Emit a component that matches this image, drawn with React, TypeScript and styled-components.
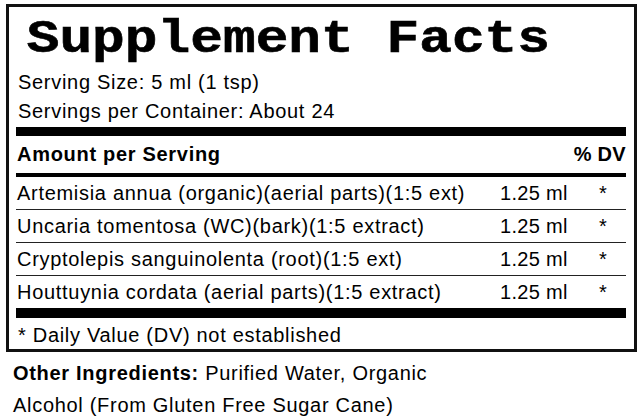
import styled, { createGlobalStyle } from "styled-components";

const GlobalStyle = createGlobalStyle`
  html, body {
    margin: 0;
    padding: 0;
    background: #fff;
  }
  body {
    font-family: "Liberation Sans", Arial, sans-serif;
    color: #000;
  }
`;

const Page = styled.div`
  width: 640px;
  height: 419px;
  padding: 4px 3px 0 6px;
  box-sizing: border-box;
  overflow: hidden;
`;

const Label = styled.section`
  border: 3px solid #111;
  padding: 0 8px 0 7px;
`;

const Title = styled.h1`
  margin: 7px 0 2px;
  padding-left: 9px;
  font-family: "Liberation Mono", "Courier New", monospace;
  font-weight: 700;
  font-size: 46px;
  line-height: 52px;
  white-space: nowrap;
  transform: scaleX(1.185);
  transform-origin: left center;
  -webkit-text-stroke: 0.6px #000;
`;

const InfoLine = styled.div`
  font-size: 20px;
  line-height: 29px;
  padding-left: 2px;
  letter-spacing: 0.7px;
`;

const Bar = styled.div<{ $h: number; $gap?: number }>`
  height: ${(p) => p.$h}px;
  margin-top: ${(p) => p.$gap ?? 0}px;
  background: #000;
`;

const HeadRow = styled.div`
  display: flex;
  justify-content: space-between;
  font-size: 20px;
  font-weight: 700;
  line-height: 37px;
  padding-left: 1px;
  letter-spacing: 0.7px;

  span:last-child {
    letter-spacing: 0.3px;
  }
`;

const Row = styled.div<{ $last?: boolean }>`
  display: grid;
  grid-template-columns: 484px 76px 1fr;
  align-items: center;
  box-sizing: border-box;
  height: ${(p) => (p.$last ? 32 : 33)}px;
  border-bottom: ${(p) => (p.$last ? "none" : "1px solid #222")};
  font-size: 20px;
`;

const Name = styled.span`
  padding-left: 1px;
  white-space: nowrap;
  letter-spacing: 0.7px;
`;

const Amount = styled.span`
  white-space: nowrap;
  letter-spacing: 0.3px;
`;

const Star = styled.span`
  text-align: center;
  padding-left: 4px;
`;

const Footnote = styled.div`
  padding-top: 4px;
  font-size: 20px;
  line-height: 27px;
  padding-left: 2px;
  letter-spacing: 0.7px;
`;

const Other = styled.p`
  margin: 5px 0 0;
  padding-left: 7px;
  font-size: 20px;
  line-height: 32px;
  letter-spacing: 0.7px;
  width: 440px;

  b {
    font-weight: 700;
  }
`;

const ingredients = [
  "Artemisia annua (organic)(aerial parts)(1:5 ext)",
  "Uncaria tomentosa (WC)(bark)(1:5 extract)",
  "Cryptolepis sanguinolenta (root)(1:5 ext)",
  "Houttuynia cordata (aerial parts)(1:5 extract)",
];

export default function App() {
  return (
    <Page>
      <GlobalStyle />
      <Label>
        <Title>Supplement Facts</Title>
        <InfoLine>Serving Size: 5 ml (1 tsp)</InfoLine>
        <InfoLine>Servings per Container: About 24</InfoLine>
        <Bar $h={9} $gap={1} />
        <HeadRow>
          <span>Amount per Serving</span>
          <span>% DV</span>
        </HeadRow>
        <Bar $h={4} />
        {ingredients.map((name, i) => (
          <Row key={name} $last={i === ingredients.length - 1}>
            <Name>{name}</Name>
            <Amount>1.25 ml</Amount>
            <Star>*</Star>
          </Row>
        ))}
        <Bar $h={10} />
        <Footnote>* Daily Value (DV) not established</Footnote>
      </Label>
      <Other>
        <b>Other Ingredients:</b> Purified Water, Organic
        <br />
        Alcohol (From Gluten Free Sugar Cane)
      </Other>
    </Page>
  );
}
